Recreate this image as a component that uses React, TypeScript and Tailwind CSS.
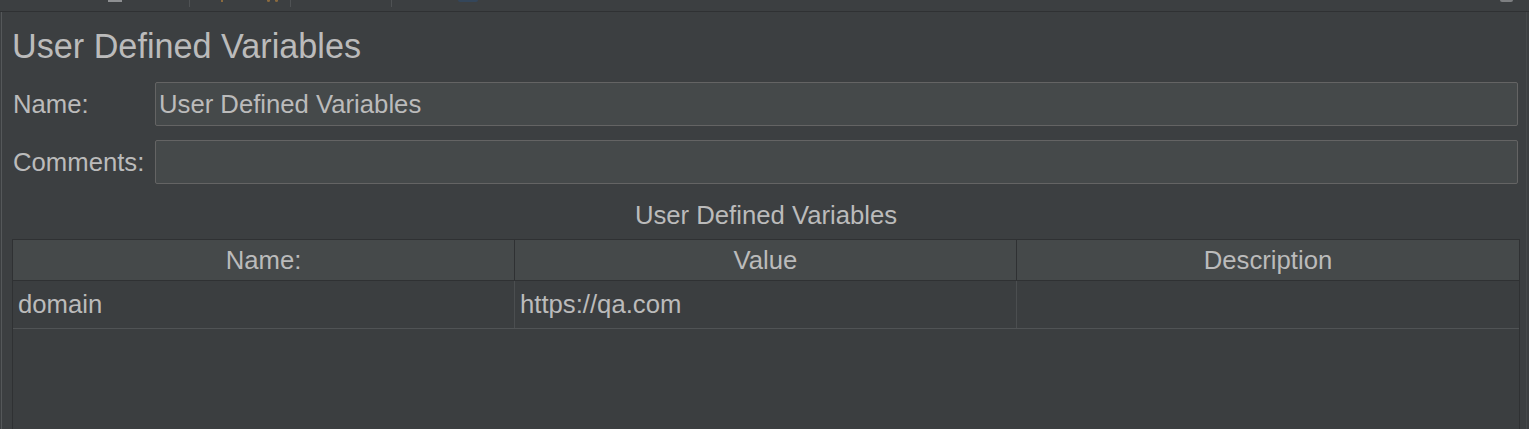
import React from 'react';

const rows = [{ name: 'domain', value: 'https://qa.com', description: '' }];

const Field: React.FC<{ label: string; value?: string }> = ({ label, value }) => (
  <div className="flex items-center h-[44px]">
    <div className="w-[142px] ml-[1px] text-[25.7px] leading-[30px]">{label}</div>
    <div className="flex-1 mr-[2px] h-[44px] flex items-center bg-[#45494a] border border-[#646464] rounded-[2px] pl-[3px] text-[25.7px] leading-[30px]">
      {value}
    </div>
  </div>
);

const App: React.FC = () => {
  return (
    <div className="w-[1529px] h-[429px] overflow-hidden bg-[#3c3f41] text-[#bbbbbb] font-['Liberation_Sans',Arial,sans-serif] flex flex-col">
      {/* toolbar strip, cut off at top */}
      <div className="h-[12px] shrink-0 border-b border-[#2f3133] flex items-start">
        <div className="ml-[108px] w-[14px] h-[2px] bg-[#8e9092]" />
        <div className="ml-[67px] w-px h-[7px] bg-[#4f5254]" />
        <div className="ml-[31px] w-[2px] h-[2px] bg-[#8a6a3e]" />
        <div className="ml-[44px] w-[3px] h-[2px] bg-[#8a6a3e] rounded-b-full" />
        <div className="ml-[5px] w-[3px] h-[2px] bg-[#8a6a3e] rounded-b-full" />
        <div className="ml-[12px] w-px h-[7px] bg-[#4f5254]" />
        <div className="ml-[100px] w-px h-[7px] bg-[#4f5254]" />
        <div className="ml-[66px] w-[20px] h-[2px] bg-[#34465a] rounded-b-full" />
        <div className="ml-[1022px] w-[13px] h-[2px] bg-[#7d7f81] rounded-b-full" />
      </div>

      <div className="flex-1 flex min-h-0">
        <div className="ml-[1px] w-px bg-[#55585a]" />
        <div className="flex-1 min-w-0 pl-[10px] pr-[6px] flex flex-col">
          <h1 className="mt-[14px] text-[34.2px] leading-[40px] font-normal">User Defined Variables</h1>

          <div className="mt-[16px] flex flex-col gap-[14px]">
            <Field label="Name:" value="User Defined Variables" />
            <Field label="Comments:" />
          </div>

          <div className="mt-[16px] text-center text-[25.7px] leading-[30px]">User Defined Variables</div>

          <div className="mt-[9px] flex-1 border border-[#2f3133] border-b-0 bg-[#3b3e40] text-[25.7px] leading-[30px]">
            <div className="grid grid-cols-3 h-[41px] border-b border-[#2f3133] bg-[#45494a]">
              <div className="flex items-center justify-center border-r border-[#2f3133]">Name:</div>
              <div className="flex items-center justify-center border-r border-[#2f3133]">Value</div>
              <div className="flex items-center justify-center">Description</div>
            </div>
            {rows.map((row, i) => (
              <div key={i} className="grid grid-cols-3 h-[48px] border-b border-[#505355]">
                <div className="flex items-center pl-[5px] pb-[2px] border-r border-[#4b4e50]">{row.name}</div>
                <div className="flex items-center pl-[5px] pb-[2px] border-r border-[#4b4e50]">{row.value}</div>
                <div className="flex items-center pl-[5px] pb-[2px]">{row.description}</div>
              </div>
            ))}
          </div>
        </div>
        <div className="w-px bg-[#45484a]" />
        <div className="w-[2px]" />
      </div>
    </div>
  );
};

export default App;
